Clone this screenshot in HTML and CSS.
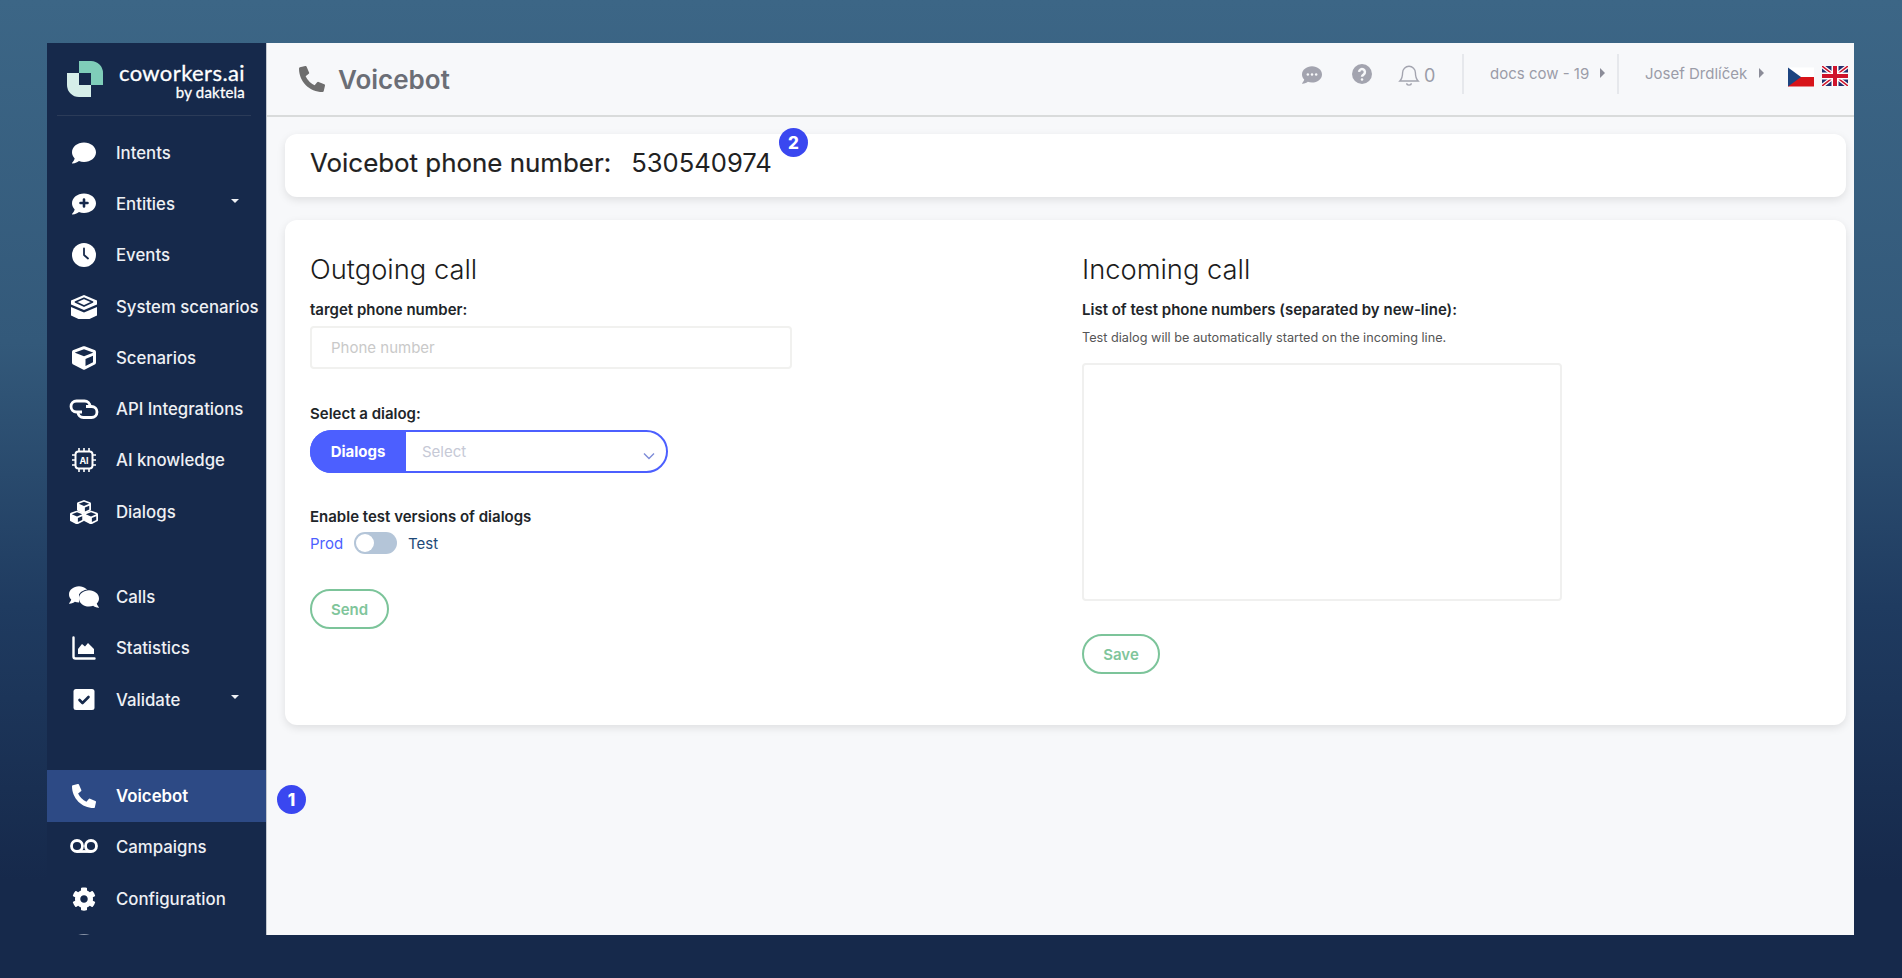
FILE: index.html
```html
<!DOCTYPE html>
<html lang="en">
<head>
  <meta charset="UTF-8" />
  <title>Voicebot - coworkers.ai</title>
  <link rel="stylesheet" href="styles.css">
</head>
<body>
  <svg class="sprite" xmlns="http://www.w3.org/2000/svg">
    <symbol id="i-comment" viewBox="0 0 512 512"><path d="M256 32C114.6 32 0 125.1 0 240c0 49.6 21.4 95 57 130.7C44.5 421.1 2.7 466 2.2 466.5c-2.2 2.3-2.8 5.7-1.5 8.7S4.8 480 8 480c66.3 0 116-31.8 140.6-51.4 32.7 12.3 69 19.4 107.4 19.4 141.4 0 256-93.1 256-208S397.4 32 256 32z"/></symbol>
    <symbol id="i-phone" viewBox="0 0 512 512"><path d="M497.39 361.8l-112-48a24 24 0 0 0-28 6.9l-49.6 60.6A370.66 370.66 0 0 1 130.6 204.11l60.6-49.6a23.94 23.94 0 0 0 6.9-28l-48-112A24.16 24.16 0 0 0 122.6.61l-104 24A24 24 0 0 0 0 48c0 256.5 207.9 464 464 464a24 24 0 0 0 23.4-18.6l24-104a24.29 24.29 0 0 0-14.01-27.6z"/></symbol>
    <symbol id="i-cube" viewBox="0 0 512 512"><path d="M239.1 6.3l-208 78c-18.7 7-31.1 25-31.1 45v225.1c0 18.2 10.3 34.8 26.5 42.9l208 104c13.5 6.8 29.4 6.8 42.9 0l208-104c16.3-8.1 26.5-24.8 26.5-42.9V129.3c0-20-12.4-37.9-31.1-44.9l-208-78C262 2.2 250 2.2 239.1 6.3zM256 68.4l192 72v1.1l-192 78-192-78v-1.1l192-72zm32 356V275.5l160-65v133.9l-160 80z"/></symbol>
    <symbol id="i-cog" viewBox="0 0 512 512"><path d="M487.4 315.7l-42.6-24.6c4.3-23.2 4.3-47 0-70.2l42.6-24.6c4.9-2.8 7.1-8.6 5.5-14-11.1-35.6-30-67.8-54.7-94.6-3.8-4.1-10-5.1-14.8-2.3L380.8 110c-17.9-15.4-38.5-27.3-60.8-35.1V25.8c0-5.6-3.9-10.5-9.4-11.7-36.7-8.2-74.3-7.8-109.2 0-5.5 1.2-9.4 6.1-9.4 11.7V75c-22.2 7.9-42.8 19.8-60.8 35.1L88.7 85.5c-4.9-2.8-11-1.9-14.8 2.3-24.7 26.7-43.6 58.9-54.7 94.6-1.7 5.4.6 11.2 5.5 14L67.3 221c-4.3 23.2-4.3 47 0 70.2l-42.6 24.6c-4.9 2.8-7.1 8.6-5.5 14 11.1 35.6 30 67.8 54.7 94.6 3.8 4.1 10 5.1 14.8 2.3l42.6-24.6c17.9 15.4 38.5 27.3 60.8 35.1v49.2c0 5.6 3.9 10.5 9.4 11.7 36.7 8.2 74.3 7.8 109.2 0 5.5-1.2 9.4-6.1 9.4-11.7v-49.2c22.2-7.9 42.8-19.8 60.8-35.1l42.6 24.6c4.9 2.8 11 1.9 14.8-2.3 24.7-26.7 43.6-58.9 54.7-94.6 1.5-5.5-.7-11.3-5.6-14.1zM256 336c-44.1 0-80-35.9-80-80s35.9-80 80-80 80 35.9 80 80-35.9 80-80 80z"/></symbol>
  </svg>

  <div class="app">
    <aside class="sidebar">
      <div class="brand">
        <svg class="brand-mark" viewBox="0 0 36 36">
          <path fill="#7fcdb9" d="M12 0h12a12 12 0 0 1 12 12v12H24V12H12z"/>
          <path fill="#d6eee9" d="M0 12h12v12h12v12H12A12 12 0 0 1 0 24z"/>
        </svg>
        <div class="brand-text">
          <span class="brand-name">coworkers.ai</span>
          <span class="brand-sub">by daktela</span>
        </div>
      </div>

      <nav class="nav">
        <a class="nav-item"><svg class="nav-icon"><use href="#i-comment"/></svg>Intents</a>
        <a class="nav-item has-caret">
          <svg class="nav-icon" viewBox="0 0 24 24">
            <use href="#i-comment" width="24" height="24"/>
            <path class="cut" d="M12 7.500v7M8.500 11h7"/>
          </svg>Entities</a>
        <a class="nav-item">
          <svg class="nav-icon" viewBox="0 0 24 24">
            <circle cx="12" cy="12" r="12" fill="#fff"/>
            <path class="cut thin" d="M12 5.500V12l4 3.500"/>
          </svg>Events</a>
        <a class="nav-item">
          <svg class="nav-icon wide" viewBox="0 0 30 24">
            <path fill="#fff" d="M15 0l13 5.500v4L15 15 2 9.500v-4z"/>
            <path class="cut thin" d="M15 3.200L23.500 7 15 11 6.500 7z"/>
            <path fill="#fff" d="M2 12l13 5.500L28 12v8.500L20.500 24h-11L2 20.500z"/>
          </svg>System scenarios</a>
        <a class="nav-item"><svg class="nav-icon"><use href="#i-cube"/></svg>Scenarios</a>
        <a class="nav-item">
          <svg class="nav-icon wide line-icon" viewBox="0 0 30 24">
            <path d="M13 15H7.500a5.500 5.500 0 0 1 0-11h8a5.500 5.500 0 0 1 5.500 5.500"/>
            <path d="M17 9.500h5.500a5.500 5.500 0 0 1 0 11h-8a5.500 5.500 0 0 1-5.500-5.500"/>
          </svg>API Integrations</a>
        <a class="nav-item">
          <svg class="nav-icon" viewBox="0 0 24 24">
            <path class="pins" d="M7 0v24M12 0v24M17 0v24M0 7h24M0 12h24M0 17h24"/>
            <rect class="chip" x="3.500" y="3.500" width="17" height="17" rx="3"/>
            <text class="chip-text" x="12" y="15.500">AI</text>
          </svg>AI knowledge</a>
        <a class="nav-item">
          <svg class="nav-icon wide" viewBox="0 0 30 24">
            <use href="#i-cube" x="8" y="0" width="14" height="14"/>
            <use href="#i-cube" x="1" y="10.500" width="14" height="14"/>
            <use href="#i-cube" x="15" y="10.500" width="14" height="14"/>
          </svg>Dialogs</a>

        <a class="nav-item group-start">
          <svg class="nav-icon wide" viewBox="0 0 30 24">
            <use href="#i-comment" x="0" y="0" width="20" height="20"/>
            <g transform="translate(30 4) scale(-1 1)"><use class="ringed" href="#i-comment" width="20" height="20"/></g>
          </svg>Calls</a>
        <a class="nav-item">
          <svg class="nav-icon" viewBox="0 0 24 24">
            <path class="axis" d="M1.500 1.500v19a2 2 0 0 0 2 2h19"/>
            <path fill="#fff" d="M6 18v-5l4-5 3 2.500L16 7l6 6v5z"/>
          </svg>Statistics</a>
        <a class="nav-item has-caret">
          <svg class="nav-icon" viewBox="0 0 24 24">
            <rect x="1.500" y="1" width="21" height="21" rx="2.500" fill="#fff"/>
            <path class="cut" d="M7.500 12l3 3 6-6"/>
          </svg>Validate</a>

        <a class="nav-item active group-end"><svg class="nav-icon"><use href="#i-phone"/></svg>Voicebot</a>
        <a class="nav-item">
          <svg class="nav-icon wide line-icon" viewBox="0 0 30 24">
            <circle cx="8" cy="11" r="5.500"/>
            <circle cx="22" cy="11" r="5.500"/>
            <path d="M8 16.500h14"/>
          </svg>Campaigns</a>
        <a class="nav-item"><svg class="nav-icon"><use href="#i-cog"/></svg>Configuration</a>
        <a class="nav-item">
          <svg class="nav-icon nav-icon-cut" viewBox="0 0 32 32"><circle cx="16" cy="16" r="16" fill="#8a94a8"/></svg></a>
      </nav>
    </aside>

    <main class="main">
      <header class="topbar">
        <svg class="topbar-icon"><use href="#i-phone"/></svg>
        <h1 class="topbar-title">Voicebot</h1>

        <div class="topbar-tools">
          <svg class="tool tool-chat" viewBox="0 0 24 24">
            <use href="#i-comment" width="24" height="24"/>
            <circle cx="7" cy="11.500" r="1.500" fill="#f7f8fa"/>
            <circle cx="12" cy="11.500" r="1.500" fill="#f7f8fa"/>
            <circle cx="17" cy="11.500" r="1.500" fill="#f7f8fa"/>
          </svg>
          <svg class="tool tool-help" viewBox="0 0 24 24">
            <circle cx="12" cy="12" r="12" fill="#a3a4af"/>
            <path class="help-mark" d="M8.500 9.500a3.500 3.500 0 1 1 5.500 3c-1.300.9-2 1.400-2 2.700"/>
            <circle cx="12" cy="18.500" r="1.500" fill="#f7f8fa"/>
          </svg>
          <svg class="tool tool-bell" viewBox="0 0 24 24">
            <path d="M12 2.500a7 7 0 0 0-7 7c0 6-1.500 7.500-3 9h20c-1.500-1.500-3-3-3-9a7 7 0 0 0-7-7zM9.500 21a2.500 2 0 0 0 5 0"/>
          </svg>
          <span class="bell-count">0</span>

          <span class="menu first">docs cow - 19<i class="menu-arrow"></i></span>
          <span class="menu second">Josef Drdlíček<i class="menu-arrow"></i></span>

          <svg class="flag flag-cz" viewBox="0 0 26 19">
            <rect width="26" height="9.500" fill="#fff"/>
            <rect y="9.500" width="26" height="9.500" fill="#d7141a"/>
            <path fill="#1c4480" d="M0 0l13 9.500L0 19z"/>
          </svg>
          <svg class="flag flag-uk" viewBox="0 0 26 20">
            <rect width="26" height="20" fill="#24306e"/>
            <path stroke="#fff" stroke-width="4" d="M0 0l26 20M26 0L0 20"/>
            <path stroke="#cf142b" stroke-width="1.500" d="M0 0l26 20M26 0L0 20"/>
            <path stroke="#fff" stroke-width="7" d="M13 0v20M0 10h26"/>
            <path stroke="#cf142b" stroke-width="4" d="M13 0v20M0 10h26"/>
          </svg>
        </div>
      </header>

      <div class="content">
        <section class="card number-card">
          <span class="number-label">Voicebot phone number:</span>
          <span class="number-value">530540974</span>
          <span class="step step-two">2</span>
        </section>

        <section class="card call-card">
          <div class="call-col">
            <h2>Outgoing call</h2>
            <label class="field-label" for="target">target phone number:</label>
            <input class="text-input" id="target" type="text" placeholder="Phone number" />

            <label class="field-label dialog-label">Select a dialog:</label>
            <div class="pill-select">
              <span class="pill-name">Dialogs</span>
              <span class="pill-value">Select</span>
              <svg class="pill-chevron" viewBox="0 0 12 8"><path d="M1 1.500l5 5 5-5"/></svg>
            </div>

            <label class="field-label enable-label">Enable test versions of dialogs</label>
            <div class="switch-row">
              <span class="switch-prod">Prod</span>
              <span class="switch"><i class="switch-knob"></i></span>
              <span class="switch-test">Test</span>
            </div>

            <button class="btn-outline btn-send" type="button">Send</button>
          </div>

          <div class="call-col">
            <h2>Incoming call</h2>
            <label class="field-label" for="numbers">List of test phone numbers (separated by new-line):</label>
            <p class="field-help">Test dialog will be automatically started on the incoming line.</p>
            <textarea class="text-area" id="numbers"></textarea>
            <button class="btn-outline btn-save" type="button">Save</button>
          </div>
        </section>
      </div>
    </main>
  </div>

  <span class="step step-one">1</span>
</body>
</html>
```

FILE: styles.css
```css
* {
  box-sizing: border-box;
}
html, body {
  height: 100%;
  overflow: hidden;
}
body {
  margin: 0;
  padding: 43px 48px 0 47px;
  position: relative;
  background: linear-gradient(180deg, #3c6686 0%, #33597a 35%, #1f3b60 62%, #16294b 90%, #16294b 100%);
  font-family: Inter, "Noto Sans", sans-serif;
  color: #212529;
}
.sprite {
  display: none;
}

.app {
  display: flex;
  height: 892px;
}

/* sidebar */
.sidebar {
  width: 220px;
  flex-shrink: 0;
  background-color: #16294b;
  border-right: 1px solid #c2c8d0;
  overflow: hidden;
}
.brand {
  height: 73px;
  margin: 0 15px 0 10px;
  padding: 18px 6px 0 10px;
  display: flex;
  justify-content: space-between;
  border-bottom: 1px solid #2b3b58;
}
.brand-mark {
  width: 36px;
  height: 36px;
}
.brand-text {
  display: flex;
  flex-direction: column;
  align-items: flex-end;
  color: #fff;
}
.brand-name {
  font-family: Lato, sans-serif;
  font-size: 22px;
  line-height: 24px;
  font-weight: 400;
  letter-spacing: 0.4px;
  -webkit-text-stroke: 0.3px #fff;
}
.brand-sub {
  font-family: Lato, sans-serif;
  font-size: 15px;
  line-height: 15px;
  font-weight: 400;
  letter-spacing: 0.2px;
  -webkit-text-stroke: 0.3px #fff;
}
.nav {
  margin-top: 11px;
}
.nav-item {
  height: 51.3px;
  padding-left: 25px;
  display: flex;
  align-items: center;
  font-size: 16.8px;
  font-weight: 500;
  color: #eef0f4;
  position: relative;
  white-space: nowrap;
}
.nav-icon {
  width: 24px;
  height: 24px;
  margin-right: 20px;
  fill: #fff;
  flex-shrink: 0;
}
.nav-icon.wide {
  width: 30px;
  margin-left: -3px;
  margin-right: 17px;
}
.nav-icon-cut {
  width: 32px;
  height: 32px;
  margin-left: -4px;
}
.line-icon {
  fill: none;
  stroke: #fff;
  stroke-width: 2.8;
}
.axis {
  fill: none;
  stroke: #fff;
  stroke-width: 2.4;
  stroke-linecap: round;
}
.nav-item.has-caret::after {
  content: "";
  position: absolute;
  right: 27px;
  top: 21px;
  border: 4px solid transparent;
  border-top-color: #eef0f4;
}
.nav-item.group-start {
  margin-top: 34px;
}
.nav-item.group-end {
  margin-top: 45px;
}
.nav-item.active {
  background-color: #2d4a85;
  color: #fff;
  font-weight: 600;
}
.cut {
  fill: none;
  stroke: #16294b;
  stroke-width: 2.6;
  stroke-linecap: round;
  stroke-linejoin: round;
}
.cut.thin {
  stroke-width: 1.8;
}
.pins {
  stroke: #fff;
  stroke-width: 1.6;
}
.chip {
  fill: #16294b;
  stroke: #fff;
  stroke-width: 2;
}
.chip-text {
  fill: #fff;
  font-size: 9px;
  font-weight: 700;
  text-anchor: middle;
}
.ringed {
  stroke: #16294b;
  stroke-width: 50px;
  paint-order: stroke;
}

/* top bar */
.main {
  flex: 1;
  min-width: 0;
  background-color: #f7f8fa;
}
.topbar {
  height: 74px;
  padding-left: 32px;
  display: flex;
  align-items: center;
  border-bottom: 2px solid #d9dbdb;
}
.topbar-icon {
  width: 26px;
  height: 26px;
  fill: #6e6e6e;
  margin-right: 13px;
}
.topbar-title {
  margin: 0;
  font-size: 26px;
  font-weight: 600;
  color: #6b6e76;
}
.topbar-tools {
  margin-left: auto;
  margin-bottom: 10px;
  display: flex;
  align-items: center;
  height: 40px;
  color: #9b9ca8;
}
.tool {
  width: 20px;
  height: 20px;
  fill: #a3a4af;
  margin-top: 2px;
}
.tool-chat {
  margin-right: 30px;
}
.tool-help {
  margin-right: 26px;
  margin-top: 0;
}
.help-mark {
  fill: none;
  stroke: #f7f8fa;
  stroke-width: 3;
}
.tool-bell {
  width: 22px;
  height: 22px;
  fill: none;
  stroke: #a3a4af;
  stroke-width: 1.5;
  margin-right: 4px;
}
.bell-count {
  font-size: 18px;
  width: 38px;
  margin-top: 2px;
}
.menu {
  height: 40px;
  padding-bottom: 2px;
  display: flex;
  align-items: center;
  font-size: 15px;
  border-left: 2px solid #e6e8ec;
  position: relative;
}
.menu.first {
  width: 155px;
  padding-left: 26px;
}
.menu.second {
  width: 171px;
  padding-left: 26px;
}
.menu-arrow {
  position: absolute;
  top: 14px;
  border: 5px solid transparent;
  border-left-color: #8b8c98;
  border-right-width: 0;
}
.first .menu-arrow {
  left: 136px;
}
.second .menu-arrow {
  left: 140px;
}
.flag {
  display: block;
  width: 26px;
  height: 20px;
  margin-top: 6px;
}
.flag-uk {
  margin-left: 8px;
  margin-right: 6px;
  margin-top: 4px;
}

/* content */
.content {
  padding: 17px 8px 0 18px;
}
.card {
  background-color: #fff;
  border-radius: 12px;
  box-shadow: 0 3px 8px rgba(0,0,0,0.1);
}
.number-card {
  height: 63px;
  padding: 0 0 6px 25px;
  display: flex;
  align-items: center;
  font-size: 25.9px;
  color: #212121;
  position: relative;
  margin-bottom: 23px;
}
.number-label {
  font-weight: 400;
  margin-right: 20px;
  -webkit-text-stroke: 0.2px #212121;
}
.number-value {
  font-size: 25.6px;
}
.step {
  position: absolute;
  width: 29px;
  height: 29px;
  border-radius: 50%;
  background-color: #3a47f0;
  color: #fff;
  font-size: 17px;
  font-weight: 800;
  display: flex;
  align-items: center;
  justify-content: center;
}
.step-two {
  left: 494px;
  top: -6px;
}
.step-one {
  left: 277px;
  top: 785px;
}
.call-card {
  height: 505px;
  padding: 34px 25px 0 25px;
  display: grid;
  grid-template-columns: 772px 1fr;
}
.call-col h2 {
  margin: 0 0 14px;
  font-size: 27.3px;
  line-height: 32px;
  font-weight: 350;
  color: #1c1c1c;
}
.field-label {
  display: block;
  font-size: 15px;
  line-height: 20px;
  font-weight: 600;
  color: #212529;
}
.text-input {
  display: block;
  width: 482px;
  height: 43px;
  margin-top: 6px;
  padding: 0 19px;
  border: 2px solid #f1f1ef;
  border-radius: 4px;
  font-family: inherit;
  font-size: 15px;
}
.text-input::placeholder {
  color: #c9c9c9;
}
.dialog-label {
  margin-top: 35px;
}
.pill-select {
  width: 358px;
  height: 43px;
  margin-top: 6px;
  border: 2px solid #4c5fff;
  border-radius: 22px;
  display: flex;
  align-items: center;
  position: relative;
}
.pill-name {
  width: 96px;
  height: 43px;
  margin-left: -2px;
  border-radius: 22px 0 0 22px;
  background-color: #4c5fff;
  color: #fff;
  font-size: 15px;
  font-weight: 700;
  display: flex;
  align-items: center;
  justify-content: center;
}
.pill-value {
  margin-left: 16px;
  font-size: 15px;
  color: #c6c9d6;
}
.pill-chevron {
  position: absolute;
  right: 11px;
  top: 20px;
  width: 12px;
  height: 8px;
  fill: none;
  stroke: #7d8bd8;
  stroke-width: 1.4;
}
.enable-label {
  margin-top: 34px;
}
.switch-row {
  height: 22px;
  margin-top: 5px;
  display: flex;
  align-items: center;
  font-size: 15px;
}
.switch-prod {
  color: #4c5fff;
  width: 44px;
}
.switch-test {
  color: #1e4a78;
  margin-left: 11px;
}
.switch {
  width: 43px;
  height: 22px;
  border-radius: 11px;
  background-color: #b4c5d8;
  padding: 2px;
}
.switch-knob {
  display: block;
  width: 18px;
  height: 18px;
  border-radius: 50%;
  background-color: #fff;
}
.btn-outline {
  display: block;
  background-color: #fff;
  border: 2px solid #7cc49a;
  border-radius: 20px;
  color: #80c59b;
  font-family: inherit;
  font-size: 15px;
  font-weight: 600;
  cursor: pointer;
}
.btn-send {
  width: 79px;
  height: 40px;
  margin-top: 35px;
}
.field-help {
  margin: 10px 0 0;
  font-size: 12.7px;
  line-height: 16px;
  color: #555;
}
.text-area {
  display: block;
  width: 480px;
  height: 238px;
  margin-top: 17px;
  border: 2px solid #f0f0ef;
  border-radius: 4px;
  resize: none;
}
.btn-save {
  width: 78px;
  height: 40px;
  margin-top: 33px;
}
```
